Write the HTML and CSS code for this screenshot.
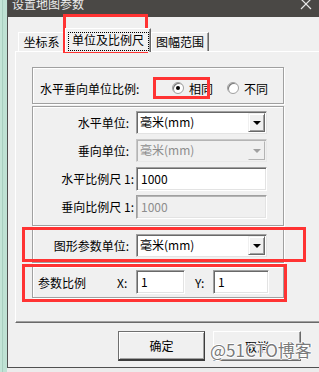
FILE: index.html
```html
<!DOCTYPE html>
<html lang="zh-CN">
<head>
    <meta charset="UTF-8">
    <meta name="viewport" content="width=device-width, initial-scale=1.0">
    <title>设置地图参数</title>
    <link rel="stylesheet" href="styles.css">
</head>
<body>
<div class="screen">
    <div class="desk"></div>
    <div class="dialog">
        <div class="titlebar">
            <span class="title">设置地图参数</span>
            <svg class="close" width="12" height="12" viewBox="0 0 12 12">
                <path d="M1 0 L11 10 M11 0 L1 10" stroke="#e6e6e6" stroke-width="1.2" fill="none"/>
            </svg>
        </div>
        <div class="client">
            <div class="tabs">
                <div class="tab tab-coord">坐标系</div>
                <div class="tab tab-unit active"><span class="focus">单位及比例尺</span></div>
                <div class="tab tab-range">图幅范围</div>
            </div>
            <div class="panel">
                <div class="group g-ratio">
                    <span class="ratio-label">水平垂向单位比例:</span>
                    <span class="radio checked"></span><span class="radio-text">相同</span>
                    <span class="radio"></span><span class="radio-text">不同</span>
                </div>
                <div class="group g-units">
                    <div class="row">
                        <span class="lbl short">水平单位:</span>
                        <div class="combo"><span class="combo-text">毫米(mm)</span><span class="combo-btn"></span></div>
                    </div>
                    <div class="row">
                        <span class="lbl short">垂向单位:</span>
                        <div class="combo disabled"><span class="combo-text">毫米(mm)</span><span class="combo-btn"></span></div>
                    </div>
                    <div class="row">
                        <span class="lbl">水平比例尺 1:</span>
                        <div class="edit wide">1000</div>
                    </div>
                    <div class="row">
                        <span class="lbl">垂向比例尺 1:</span>
                        <div class="edit wide disabled">1000</div>
                    </div>
                </div>
                <div class="group g-shape">
                    <div class="row">
                        <span class="lbl short">图形参数单位:</span>
                        <div class="combo"><span class="combo-text">毫米(mm)</span><span class="combo-btn"></span></div>
                    </div>
                </div>
                <div class="group g-param">
                    <span class="param-label">参数比例</span>
                    <span class="axis">X:</span>
                    <div class="edit px">1</div>
                    <span class="axis axis-y">Y:</span>
                    <div class="edit py">1</div>
                </div>
            </div>
            <div class="buttons">
                <div class="btn default">确定</div>
                <div class="btn">取消</div>
            </div>
        </div>
    </div>

    <div class="mark m-tab"></div>
    <div class="mark m-radio"></div>
    <div class="mark m-shape"></div>
    <div class="mark m-param"></div>
    <div class="watermark">@51CTO博客</div>
</div>
</body>
</html>
```

FILE: styles.css
```css
* {
    box-sizing: border-box;
}
body {
    margin: 0;
    font-family: "Noto Sans CJK SC", "Noto Sans", sans-serif;
    font-size: 12px;
    color: #000;
}
.screen {
    position: relative;
    width: 319px;
    height: 372px;
    overflow: hidden;
    display: flex;
    align-items: flex-start;
    background: #ececec;
}
.desk {
    flex: none;
    width: 7px;
    height: 372px;
    background: linear-gradient(to right, #c4e5d8 0, #c4e5d8 2px, #a9cfc0 2px, #a9cfc0 3px, #bfe2d4 3px);
}
.dialog {
    flex: none;
    width: 326px;
    height: 368px;
    border-left: 1px solid #505050;
    border-bottom: 1px solid #505050;
    background: #f0f0f0;
    display: flex;
    flex-direction: column;
}

/* title bar */
.titlebar {
    height: 17px;
    flex: none;
    background: #4a4845;
    display: flex;
    justify-content: space-between;
    overflow: hidden;
}
.title {
    color: #ececec;
    line-height: 12px;
    margin-top: -2px;
    padding-left: 4px;
}
.close {
    margin-right: 21px;
    margin-top: -1px;
}

/* tabs */
.tabs {
    height: 34px;
    display: flex;
    align-items: flex-end;
    padding-left: 10px;
}
.tab {
    height: 19px;
    border-top: 1px solid #fff;
    border-left: 1px solid #fff;
    border-right: 1px solid #696969;
    box-shadow: inset -1px 0 #a0a0a0;
    display: flex;
    align-items: center;
    justify-content: center;
    line-height: 14px;
}
.tab-coord {
    width: 47px;
}
.tab-unit {
    width: 86px;
}
.tab-range {
    width: 58px;
}
.tab.active {
    height: 24px;
    margin-bottom: -1px;
    position: relative;
    z-index: 1;
    background: #f0f0f0;
    align-items: flex-start;
    padding-top: 3px;
}
.focus {
    display: block;
    height: 19px;
    width: 81px;
    border: 1px dotted #000;
    text-align: center;
    line-height: 12px;
    padding-top: 1px;
}

/* tab panel */
.panel {
    margin-left: 7px;
    height: 272px;
    border-top: 1px solid #fff;
    border-left: 1px solid #fff;
    border-right: 1px solid #696969;
    border-bottom: 1px solid #696969;
    box-shadow: inset -1px -1px #a0a0a0;
    padding: 15px 0 0 16px;
}
.group {
    width: 252px;
    border: 1px solid #a0a0a0;
    box-shadow: 1px 1px #fff, inset 1px 1px #fff;
}
.g-ratio {
    height: 37px;
    display: flex;
    align-items: center;
    padding: 5px 0 0 7px;
}
.ratio-label {
    width: 132px;
}
.radio {
    width: 12px;
    height: 12px;
    border-radius: 50%;
    border: 1px solid #a0a0a0;
    box-shadow: inset 1px 1px #7a7a7a;
    background: #fff;
    display: flex;
    align-items: center;
    justify-content: center;
    margin-right: 5px;
}
.radio.checked::after {
    content: "";
    width: 4px;
    height: 4px;
    border-radius: 50%;
    background: #000;
}
.radio-text {
    width: 38px;
}
.g-units {
    margin-top: 2px;
    height: 120px;
    padding-top: 4px;
    display: flex;
    flex-direction: column;
    gap: 5px;
}
.row {
    height: 23px;
    display: flex;
    align-items: center;
}
.lbl {
    width: 103px;
    text-align: right;
    padding-right: 2px;
}
.lbl.short {
    padding-right: 7px;
}
.g-shape {
    margin-top: 2px;
    height: 35px;
    padding-top: 5px;
}
.g-param {
    margin-top: 3px;
    height: 32px;
    display: flex;
    align-items: center;
    padding-left: 5px;
}
.param-label {
    width: 79px;
}
.axis {
    width: 19px;
}
.axis-y {
    width: 18px;
    margin-left: 10px;
}

/* controls */
.combo {
    width: 131px;
    height: 23px;
    display: flex;
    background: #fff;
    border: 1px solid;
    border-color: #a0a0a0 #e3e3e3 #e3e3e3 #a0a0a0;
    box-shadow: inset 1px 1px #696969;
}
.combo-text {
    flex: 1;
    line-height: 20px;
    padding-left: 3px;
}
.combo-btn {
    width: 17px;
    margin: 1px 1px 1px 0;
    background: #f0f0f0;
    border: 1px solid;
    border-color: #f0f0f0 #696969 #696969 #f0f0f0;
    box-shadow: inset 1px 1px #fff, inset -1px -1px #a0a0a0;
    display: flex;
    align-items: center;
    justify-content: center;
}
.combo-btn::after {
    content: "";
    border-left: 4px solid transparent;
    border-right: 4px solid transparent;
    border-top: 4px solid #000;
}
.combo.disabled {
    background: #f0f0f0;
    color: #8d8d8d;
    border-color: #c8c8c8 #e8e8e8 #e8e8e8 #c8c8c8;
    box-shadow: inset 1px 1px #b4b4b4;
}
.combo.disabled .combo-btn {
    border-color: #f0f0f0 #b4b4b4 #b4b4b4 #f0f0f0;
    box-shadow: none;
}
.combo.disabled .combo-btn::after {
    border-top-color: #a0a0a0;
}
.edit {
    height: 24px;
    background: #fff;
    border: 1px solid;
    border-color: #a0a0a0 #fff #fff #a0a0a0;
    box-shadow: inset 1px 1px #696969, inset -1px -1px #e3e3e3;
    line-height: 21px;
    padding-left: 4px;
}
.edit.wide {
    width: 131px;
}
.edit.disabled {
    background: #f0f0f0;
    color: #8d8d8d;
    box-shadow: inset 1px 1px #b4b4b4, inset -1px -1px #e3e3e3;
}
.edit.px {
    width: 49px;
}
.edit.py {
    width: 56px;
}

/* buttons */
.buttons {
    display: flex;
    gap: 8px;
    padding: 8px 0 0 110px;
}
.btn {
    width: 88px;
    height: 30px;
    display: flex;
    align-items: center;
    justify-content: center;
    border: 1px solid;
    border-color: #fff #696969 #696969 #fff;
    box-shadow: inset -1px -1px #a0a0a0;
}
.btn.default {
    width: 87px;
    border-color: #6f6f6f;
    border-bottom: 2px solid #3c3c3c;
    border-right-color: #3c3c3c;
    box-shadow: inset 1px 1px #fff, inset -1px -1px #a0a0a0;
}

/* annotations */
.mark {
    position: absolute;
    border: 3px solid #f33;
}
.m-tab {
    left: 63px;
    top: 14px;
    width: 85px;
    height: 39px;
}
.m-radio {
    left: 153px;
    top: 77px;
    width: 57px;
    height: 22px;
}
.m-shape {
    left: 22px;
    top: 227px;
    width: 284px;
    height: 35px;
}
.m-param {
    left: 22px;
    top: 264px;
    width: 265px;
    height: 38px;
}
.watermark {
    position: absolute;
    left: 210px;
    top: 340px;
    font-size: 17px;
    line-height: 20px;
    color: #7a7a7a;
    text-shadow: 1px 0 #fff, -1px 0 #fff, 0 1px #fff, 0 -1px #fff;
}
```
